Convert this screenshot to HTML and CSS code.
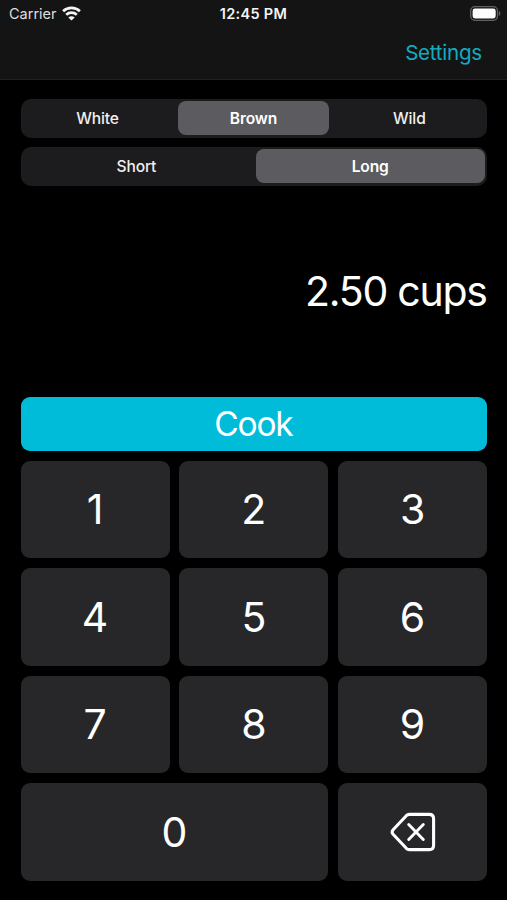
FILE: index.html
```html
<!DOCTYPE html>
<html lang="en">
<head>
<meta charset="utf-8">
<title>Rice</title>
<link rel="stylesheet" href="styles.css">
</head>
<body>
<header class="top">
  <div class="status">
    <div class="carrier"><span>Carrier</span>
      <svg class="wifi" width="19" height="15" viewBox="0 0 19 15" fill="none" stroke="#f4f4f4" stroke-width="2.7">
        <path d="M1.1 5.2C5.8.7 13.2.7 17.9 5.2"/>
        <path d="M4.2 8.7C7.2 5.9 11.8 5.9 14.8 8.7"/>
        <path d="M9.5 14.5 6.3 11.5C8.1 9.8 10.9 9.8 12.7 11.5Z" fill="#f4f4f4" stroke="none"/>
      </svg>
    </div>
    <div class="time">12:45 PM</div>
    <svg class="battery" width="31" height="15" viewBox="0 0 31 15">
      <rect x=".7" y=".7" width="26.8" height="13.6" rx="4.2" fill="none" stroke="#626264" stroke-width="1.3"/>
      <rect x="2.6" y="2.5" width="23.1" height="10" rx="2.4" fill="#fff"/>
      <path d="M28.9 5Q30.4 5.8 30.4 7.5T28.9 10Z" fill="#626264"/>
    </svg>
  </div>
  <nav class="nav"><a class="settings">Settings</a></nav>
</header>
<main class="main">
  <div class="segments three">
    <div class="segment first">White</div><div class="segment selected">Brown</div><div class="segment last">Wild</div>
  </div>
  <div class="segments two">
    <div class="segment">Short</div><div class="segment selected">Long</div>
  </div>
  <div class="amount"><span>2.50 cups</span></div>
  <div class="cook"><span>Cook</span></div>
  <div class="keypad">
    <div class="key">1</div><div class="key">2</div><div class="key">3</div>
    <div class="key">4</div><div class="key">5</div><div class="key">6</div>
    <div class="key">7</div><div class="key">8</div><div class="key">9</div>
    <div class="key wide">0</div>
    <div class="key">
      <svg width="46" height="40" viewBox="0 0 46 40" fill="none" stroke="#fff" stroke-width="3.1" stroke-linecap="round" stroke-linejoin="round">
        <path d="M19.3 2.4H39.2Q43.6 2.4 43.6 6.8V33.2Q43.6 37.6 39.2 37.6H19.3Q17.6 37.6 16.3 36.3L3.1 22.3Q1.2 20 3.1 17.7L16.3 3.7Q17.6 2.4 19.3 2.4Z"/>
        <path d="M18.7 12.6 33.3 27.4M33.3 12.6 18.7 27.4" stroke-width="2.9"/>
      </svg>
    </div>
  </div>
</main>
</body>
</html>
```
FILE: styles.css
```css
* { box-sizing: border-box; }
body {
  margin: 0;
  height: 900px;
  background: #000;
  color: #fff;
  font-family: Inter, "Liberation Sans", sans-serif;
  overflow: hidden;
}
.top {
  height: 80px;
  background: #141414;
  border-bottom: 1px solid #202021;
}
.status {
  display: grid;
  grid-template-columns: 1fr auto 1fr;
  align-items: center;
  height: 27px;
  padding: 0 6px 0 9px;
}
.carrier {
  display: flex;
  align-items: center;
  gap: 5px;
  font-size: 14.5px;
  color: #dededf;
}
.wifi { margin-top: -1px; }
.time {
  margin-right: 3px;
  font-size: 14.5px;
  font-weight: 600;
  letter-spacing: 0.3px;
  color: #f4f4f4;
}
.battery { justify-self: end; }
.nav {
  display: flex;
  justify-content: flex-end;
  align-items: center;
  height: 50px;
  padding-right: 25px;
}
.settings {
  color: #12acbe;
  font-size: 20.6px;
  letter-spacing: -0.25px;
}
.main { padding: 18.5px 19.8px 0 20.5px; }
.segments {
  display: grid;
  height: 39px;
  padding: 2.5px;
  border-radius: 10px;
  background: #1c1c1e;
}
.three { grid-template-columns: 155px 151px 1fr; }
.two {
  grid-template-columns: 1fr 229px;
  margin-top: 9px;
}
.segment {
  display: flex;
  align-items: center;
  justify-content: center;
  border-radius: 8px;
  font-size: 15.6px;
  font-weight: 500;
  letter-spacing: -0.15px;
  color: #f0f0f0;
}
.first { padding-right: 6px; }
.last { padding-left: 5px; }
.two .segment:first-child { padding-right: 6px; }
.selected {
  background: #5c5b60;
  font-weight: 600;
  color: #fff;
}
.amount {
  display: flex;
  align-items: center;
  justify-content: flex-end;
  height: 211.5px;
  font-size: 41px;
  letter-spacing: -1.25px;
}
.amount span { margin-right: 0.5px; }
.cook {
  display: flex;
  align-items: center;
  justify-content: center;
  height: 53.5px;
  border-radius: 9px;
  background: #00bcd9;
  font-size: 33.5px;
  font-weight: 400;
  letter-spacing: -1.2px;
}
.cook span { margin-right: 1px; }
.keypad {
  display: grid;
  grid-template-columns: repeat(3, 1fr);
  grid-auto-rows: 97.5px;
  gap: 10px 9.5px;
  margin-top: 10px;
}
.key {
  display: flex;
  align-items: center;
  justify-content: center;
  border-radius: 9px;
  background: #272729;
  font-size: 41px;
}
.wide { grid-column: span 2; }
```
